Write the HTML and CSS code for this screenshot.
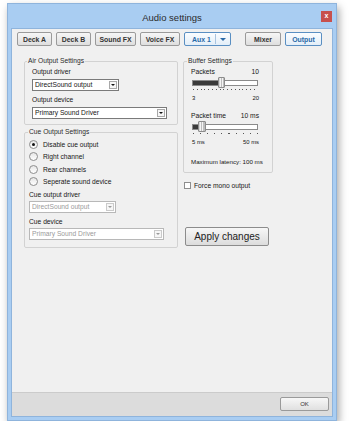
FILE: index.html
```html
<!DOCTYPE html>
<html lang="en">
<head>
  <meta charset="UTF-8">
  <title>Audio settings</title>
  <link rel="stylesheet" href="styles.css">
</head>
<body>

  <div class="window">
    <div class="titlebar">
      <span class="title">Audio settings</span>
      <span class="close">x</span>
    </div>

    <div class="client">
      <div class="tabs">
        <button class="tab">Deck A</button>
        <button class="tab">Deck B</button>
        <button class="tab">Sound FX</button>
        <button class="tab">Voice FX</button>
        <button class="tab tab-active tab-split">Aux 1<span class="split-arrow"></span></button>
        <button class="tab tab-gap">Mixer</button>
        <button class="tab tab-active">Output</button>
      </div>

      <div class="content">
        <div class="col-left">
          <fieldset class="group air">
            <legend>Air Output Settings</legend>
            <div class="label first">Output driver</div>
            <div class="select short"><span class="value">DirectSound output</span><span class="arrow"></span></div>
            <div class="label">Output device</div>
            <div class="select long"><span class="value">Primary Sound Driver</span><span class="arrow"></span></div>
          </fieldset>

          <fieldset class="group cue">
            <legend>Cue Output Settings</legend>
            <div class="radio-row"><span class="radio checked"></span>Disable cue output</div>
            <div class="radio-row"><span class="radio"></span>Right channel</div>
            <div class="radio-row"><span class="radio"></span>Rear channels</div>
            <div class="radio-row"><span class="radio"></span>Seperate sound device</div>
            <div class="label cue-label">Cue output driver</div>
            <div class="select short disabled"><span class="value">DirectSound output</span><span class="arrow"></span></div>
            <div class="label">Cue device</div>
            <div class="select long disabled"><span class="value">Primary Sound Driver</span><span class="arrow"></span></div>
          </fieldset>
        </div>

        <div class="col-right">
          <fieldset class="group buffer">
            <legend>Buffer Settings</legend>
            <div class="slider-head first"><span>Packets</span><span>10</span></div>
            <div class="slider">
              <div class="track"><div class="fill fill-packets"></div></div>
              <div class="thumb thumb-packets"></div>
            </div>
            <div class="ticks ticks-packets"></div>
            <div class="scale"><span>3</span><span>20</span></div>

            <div class="slider-head second"><span>Packet time</span><span>10 ms</span></div>
            <div class="slider">
              <div class="track"><div class="fill fill-time"></div></div>
              <div class="thumb thumb-time"></div>
            </div>
            <div class="ticks ticks-time"></div>
            <div class="scale"><span>5 ms</span><span>50 ms</span></div>

            <div class="latency">Maximum latency: 100 ms</div>
          </fieldset>

          <div class="check-row"><span class="checkbox"></span>Force mono output</div>

          <button class="apply">Apply changes</button>
        </div>
      </div>

      <div class="footer">
        <button class="ok">OK</button>
      </div>
    </div>
  </div>

</body>
</html>
```

FILE: styles.css
```css
body {
  margin: 0;
  background-color: #fff;
  font-family: "Liberation Sans", Arial, sans-serif;
  font-size: 6.7px;
  color: #161616;
}
.window {
  margin: 3px 0 0 7px;
  width: 330px;
  height: 418px;
  box-sizing: border-box;
  background-color: #a9cdf2;
  border: 1px solid #8fb4dc;
  padding: 0 3px 3px 3px;
  display: flex;
  flex-direction: column;
  box-shadow: 2px 4px 8px rgba(0,0,0,0.35);
}
.titlebar {
  height: 24px;
  display: flex;
  align-items: center;
  justify-content: center;
  position: relative;
}
.title {
  font-size: 9.5px;
  color: #2b2b2b;
  margin-top: 2px;
}
.close {
  position: absolute;
  right: 1px;
  top: 7px;
  width: 11px;
  height: 11px;
  background-color: #c7504d;
  color: #fff;
  font-size: 7px;
  font-weight: bold;
  line-height: 10px;
  text-align: center;
}
.client {
  flex: 1;
  background-color: #f0f0f0;
  border: 1px solid #8fb4dc;
  display: flex;
  flex-direction: column;
}
.tabs {
  display: flex;
  padding: 3px 9px 0 5px;
  gap: 4px;
}
button {
  font-family: "Liberation Sans", Arial, sans-serif;
  margin: 0;
  cursor: default;
  white-space: nowrap;
}
.tab {
  height: 14px;
  padding: 0;
  font-size: 6.9px;
  font-weight: bold;
  color: #333;
  background: linear-gradient(#f6f6f6, #dedede);
  border: 1px solid #9a9a9a;
  border-radius: 2px;
  display: flex;
  align-items: center;
  justify-content: center;
}
.tab:nth-child(1), .tab:nth-child(2) { width: 35px; }
.tab:nth-child(3) { width: 41px; }
.tab:nth-child(4) { width: 40px; }
.tab-active {
  color: #2a6aa8;
  border-color: #5a8fc2;
  background: linear-gradient(#fbfdff, #e3eef8);
}
.tab-split {
  width: 47px;
  padding: 0 0 0 7px;
  justify-content: flex-start;
}
.split-arrow {
  margin-left: auto;
  width: 14px;
  height: 10px;
  border-left: 1px solid #a8c4e0;
  position: relative;
}
.split-arrow::after {
  content: "";
  position: absolute;
  left: 4px;
  top: 4px;
  border-left: 3px solid transparent;
  border-right: 3px solid transparent;
  border-top: 3px solid #2a6aa8;
}
.tab-gap {
  margin-left: 10px;
  width: 36px;
}
.tab:last-child {
  width: 37px;
}
.content {
  flex: 1;
  display: flex;
  padding: 0 0 0 12px;
  gap: 5px;
}
.col-left {
  width: 154px;
}
.col-right {
  width: 90px;
}
.group {
  margin: 0;
  border: 1px solid #d2d2d2;
  border-radius: 2px;
  min-width: 0;
}
.group legend {
  padding: 0 1px;
  line-height: 10px;
  color: #2b2b2b;
}
.air {
  margin-top: 10px;
  padding: 0 7px 5px 7px;
}
.air legend { margin-left: -5px; }
.label {
  line-height: 10px;
  margin-top: 4px;
}
.label.first {
  margin-top: 1px;
}
.select {
  margin-top: 2px;
  height: 12px;
  box-sizing: border-box;
  border: 1px solid #7a7a7a;
  background-color: #fff;
  display: flex;
  align-items: center;
  padding-left: 2px;
}
.select .value {
  flex: 1;
  white-space: nowrap;
  overflow: hidden;
  line-height: 10px;
}
.select .arrow {
  width: 8px;
  height: 8px;
  margin-right: 1px;
  border: 1px solid #a8a8a8;
  box-sizing: border-box;
  background-color: #f6f6f6;
  position: relative;
}
.select .arrow::after {
  content: "";
  position: absolute;
  left: 1px;
  top: 2px;
  border-left: 2px solid transparent;
  border-right: 2px solid transparent;
  border-top: 2px solid #111;
}
.select.short { width: 87px; }
.select.long { width: 135px; }
.select.disabled {
  border-color: #b8b8b8;
  color: #9a9a9a;
}
.select.disabled .arrow {
  border-color: #cacaca;
}
.select.disabled .arrow::after {
  border-top-color: #9a9a9a;
}
.cue {
  margin-top: 2px;
  padding: 1px 4px 7px 4px;
}
.cue legend { margin-left: -1px; }
.radio-row {
  height: 12.5px;
  display: flex;
  align-items: center;
}
.radio {
  width: 7px;
  height: 7px;
  margin: 0 5px 0 0;
  border: 1px solid #8e8e8e;
  border-radius: 50%;
  background: linear-gradient(#e6e6e6, #fff);
  position: relative;
  flex-shrink: 0;
}
.radio.checked::after {
  content: "";
  position: absolute;
  left: 2px;
  top: 2px;
  width: 3px;
  height: 3px;
  border-radius: 50%;
  background-color: #111;
}
.cue-label {
  margin-top: 2px;
}
.cue .select {
  margin-top: 1px;
}
.buffer {
  margin-top: 10px;
  padding: 0 13px 5px 7px;
}
.buffer legend { margin-left: -4px; }
.slider-head {
  display: flex;
  justify-content: space-between;
  line-height: 10px;
}
.slider-head.first { margin-top: 1px; }
.slider-head.second { margin-top: 8px; }
.slider {
  position: relative;
  height: 12px;
  margin-left: 1px;
  margin-right: 1px;
}
.track {
  position: absolute;
  left: 0;
  right: 0;
  top: 3px;
  height: 6px;
  border: 1px solid #8a8a8a;
  box-sizing: border-box;
  background-color: #fff;
}
.fill {
  height: 100%;
  background-color: #3a3a3a;
}
.fill-packets { width: 28px; }
.fill-time { width: 8px; }
.thumb {
  position: absolute;
  top: 0;
  width: 7px;
  height: 11px;
  border: 1px solid #8c8c8c;
  box-sizing: border-box;
  border-radius: 1px;
  background: linear-gradient(90deg, #d6d6d6 0 1px, #f4f4f4 1px 2px, #bdbdbd 2px 3px, #f4f4f4 3px 4px, #bdbdbd 4px 5px);
}
.thumb-packets { left: 26px; }
.thumb-time { left: 6px; width: 8px; }
.ticks {
  height: 1px;
  margin: 0 1px 0 2px;
}
.ticks-packets {
  background: repeating-linear-gradient(90deg, #555 0 1px, transparent 1px 3.8px);
}
.ticks-time {
  background: repeating-linear-gradient(90deg, #555 0 1px, transparent 1px 7.1px);
}
.scale {
  display: flex;
  justify-content: space-between;
  font-size: 5.9px;
  line-height: 10px;
  margin-top: 3px;
  padding-left: 1px;
}
.latency {
  margin-top: 10px;
  line-height: 10px;
  font-size: 6.2px;
  white-space: nowrap;
}
.check-row {
  margin-top: 7px;
  height: 10px;
  display: flex;
  align-items: center;
  padding-left: 1px;
}
.checkbox {
  width: 7px;
  height: 7px;
  border: 1px solid #8e8e8e;
  background-color: #fff;
  margin-right: 3px;
  box-sizing: border-box;
}
.apply {
  margin-top: 37px;
  margin-left: 2px;
  width: 84px;
  height: 19px;
  font-size: 10px;
  color: #222;
  background: linear-gradient(#f7f7f7, #dcdcdc);
  border: 1px solid #8c8c8c;
  border-radius: 2px;
}
.footer {
  height: 24px;
  box-sizing: border-box;
  border-top: 1px solid #cbcbcb;
  background-color: #dcdcdc;
  display: flex;
  justify-content: flex-end;
  padding: 4px 3px 0 0;
}
.ok {
  width: 49px;
  height: 14px;
  font-size: 6px;
  color: #333;
  background: linear-gradient(#f7f7f7, #e0e0e0);
  border: 1px solid #9a9a9a;
  border-radius: 2px;
}
```
